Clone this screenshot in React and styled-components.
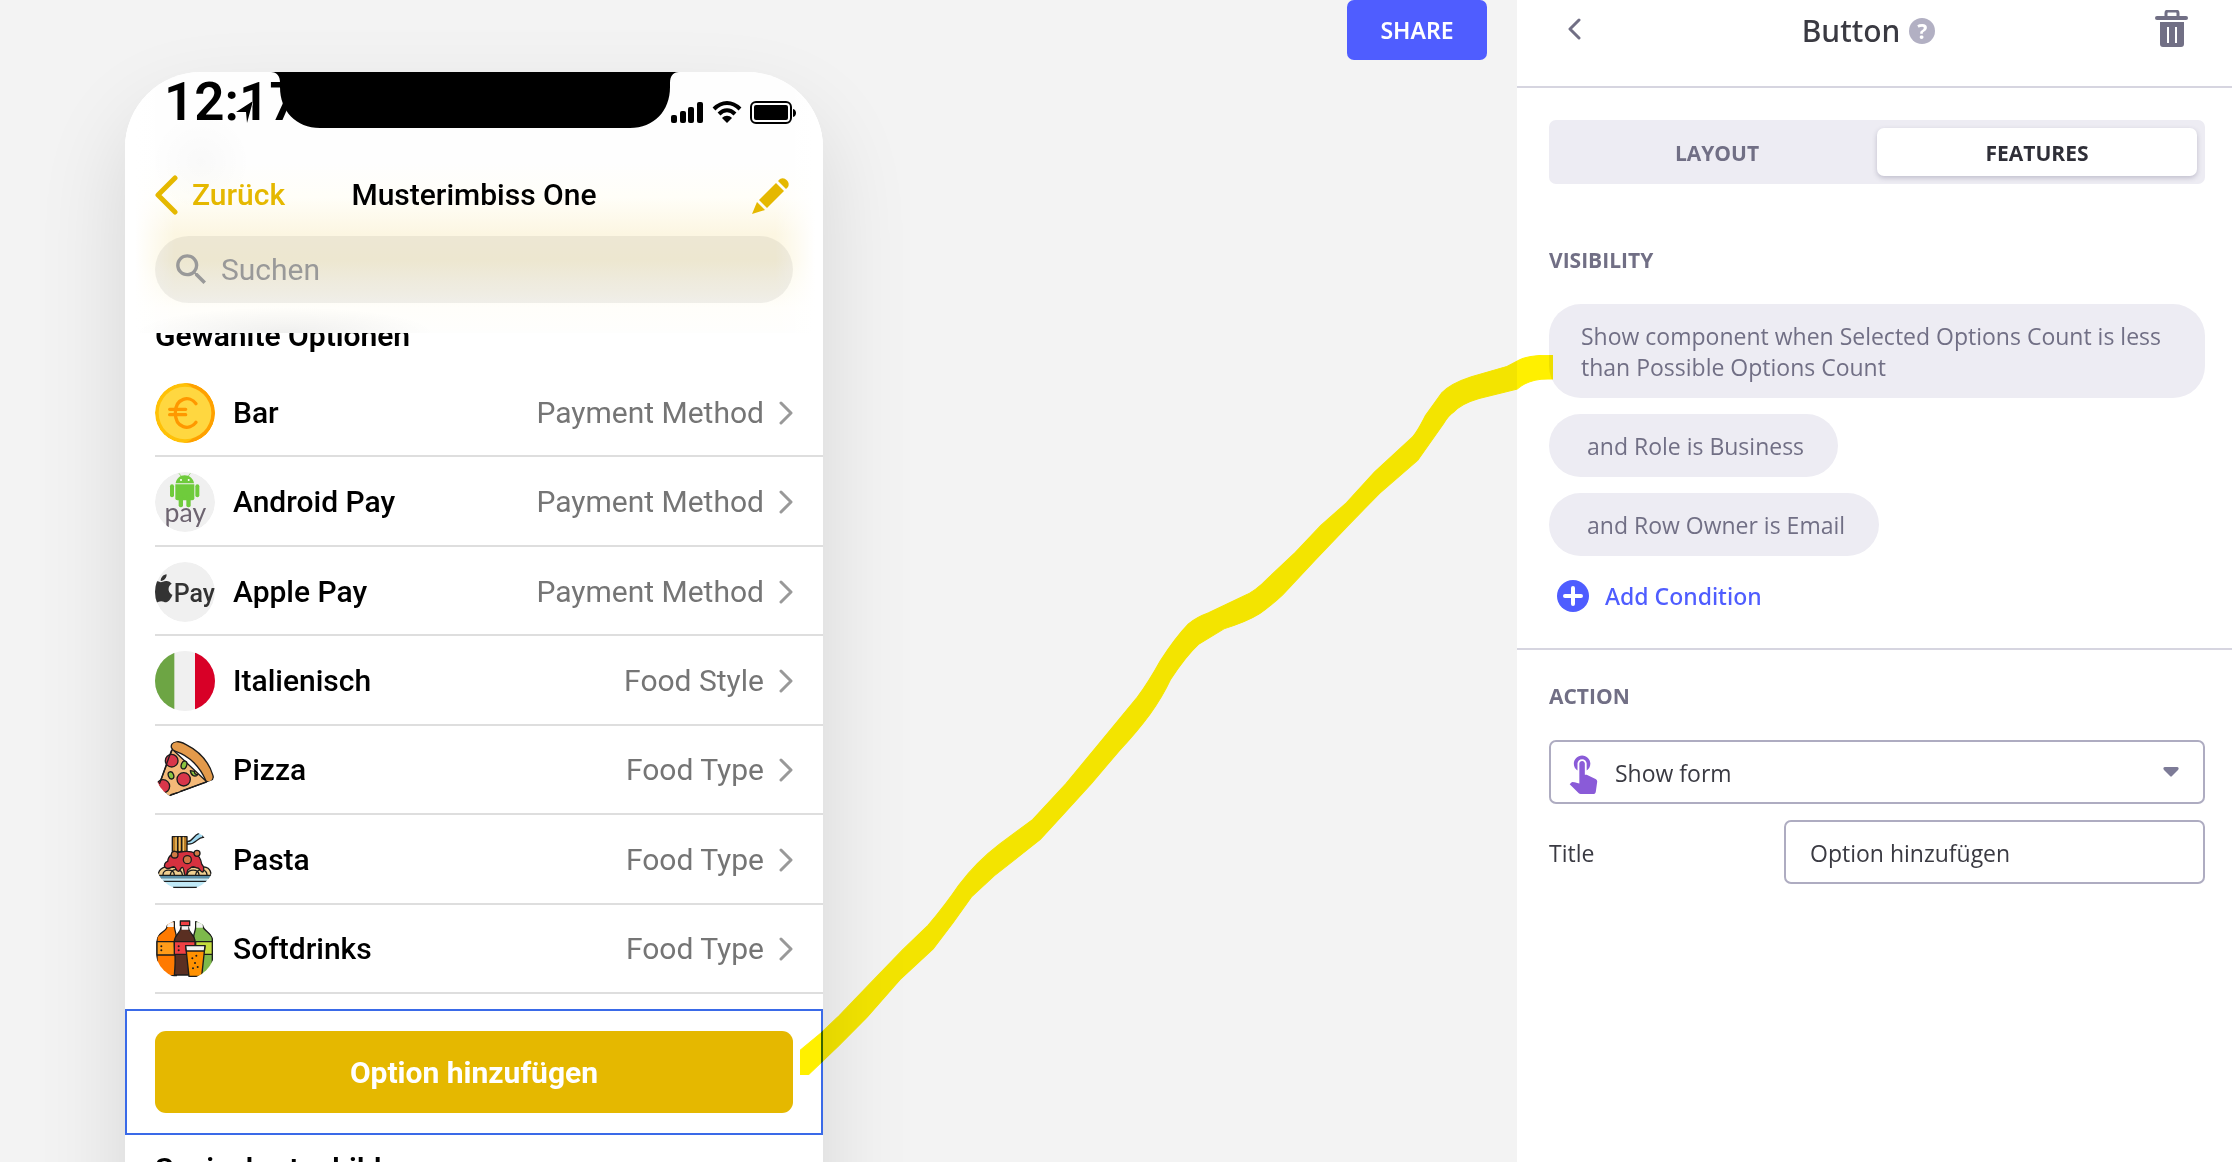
import styled, { createGlobalStyle } from "styled-components";
import { FaApple } from "react-icons/fa";
import { MdSearch, MdTouchApp } from "react-icons/md";

const INK = "#1c1c1c";

const Coin = () => (
  <svg viewBox="0 0 180 180">
    <circle cx="90" cy="90" r="90" fill="#ffc107" />
    <path d="M90 0a90 90 0 0 1 0 180a100 100 0 0 0 60-90a100 100 0 0 0-60-90z" fill="#ffa000" />
    <circle cx="90" cy="90" r="79" fill="#ffd740" />
    <g fill="none" stroke="#ff9800" strokeWidth="10" strokeLinecap="round">
      <path d="M123 62c-19-26-62-18-62 28s43 54 62 28" />
      <path d="M44 79h48M44 95h48" />
    </g>
  </svg>
);

const AndroidPay = () => (
  <svg viewBox="0 0 180 180">
    <circle cx="90" cy="90" r="90" fill="#f0f0f0" />
    <g fill="#6fcb3c">
      <path d="M62 34c2-14 13-24 27-24s26 10 28 24z" />
      <path d="M78 12l-6-8M100 12l6-8" stroke="#6fcb3c" strokeWidth="2" />
      <path d="M61 37h57v42a6 6 0 0 1-6 6H67a6 6 0 0 1-6-6z" />
      <rect x="45" y="37" width="12" height="39" rx="6" />
      <rect x="121" y="37" width="12" height="39" rx="6" />
      <rect x="71" y="70" width="13" height="36" rx="6" />
      <rect x="94" y="70" width="13" height="36" rx="6" />
    </g>
    <circle cx="78" cy="24" r="3" fill="#fff" />
    <circle cx="101" cy="24" r="3" fill="#fff" />
    <text x="91" y="151" textAnchor="middle" fontFamily="Lato, sans-serif" fontSize="80" fill="#6d6470">
      pay
    </text>
  </svg>
);

const ApplePay = () => (
  <svg viewBox="0 0 180 180">
    <circle cx="90" cy="90" r="90" fill="#f0f0f0" />
    <FaApple x="-31" y="31" size={96} color="#333" />
    <text x="56" y="121" fontFamily="Roboto, sans-serif" fontWeight="500" fontSize="75" fill="#333">
      Pay
    </text>
  </svg>
);

const Flag = () => (
  <svg viewBox="0 0 180 180">
    <rect width="180" height="180" fill="#f0f0f0" />
    <rect width="58" height="180" fill="#6da544" />
    <rect x="120" width="60" height="180" fill="#d80027" />
  </svg>
);

const Pizza = () => (
  <svg viewBox="0 0 180 180">
    <g stroke={INK} strokeWidth="4" strokeLinejoin="round" strokeLinecap="round">
      <path d="M52 28L8 146L42 168L156 126z" fill="#f4b978" />
      <circle cx="50" cy="62" r="19" fill="#d9364a" />
      <circle cx="86" cy="118" r="20" fill="#d9364a" />
      <circle cx="24" cy="139" r="20" fill="#d9364a" />
      <ellipse cx="87" cy="75" rx="8" ry="12" fill="#8bc53f" transform="rotate(20 87 75)" />
      <ellipse cx="48" cy="106" rx="8" ry="11" fill="#8bc53f" transform="rotate(-20 48 106)" />
      <path d="M106 92c2 16 14 20 22 12c-8 0-10-6-10-10z" fill="#8bc53f" />
      <path
        d="M52 10c8-10 22-6 40 3c44 22 70 52 82 94c4 16-14 24-22 14C136 82 104 48 62 34c-14-4-16-16-10-24z"
        fill="#e39a4b"
      />
    </g>
    <path d="M0 118L42 0H0zM0 140L38 172L180 118V180H0z" fill="#fff" />
    <path d="M48 164l20-6M76 154l78-28M49 32L14 130" stroke={INK} strokeWidth="4" strokeLinecap="round" />
  </svg>
);

const Pasta = () => (
  <svg viewBox="0 0 180 180">
    <g stroke={INK} strokeWidth="4" strokeLinejoin="round" strokeLinecap="round">
      <path d="M96 34c16 4 18-18 36-24c6-2 12-2 18 0c-8 2-8 10-4 12c-20-2-22 24-50 20z" fill="#9fd8ef" />
      <rect x="52" y="20" width="44" height="44" fill="#b87a23" />
      <path d="M63 22v40M74 22v40M85 22v40" stroke="#f0c46a" />
      <path d="M68 22v40M80 22v40" />
      <path d="M10 136c0-24 24-28 34-24h96c14-4 28 4 28 24z" fill="#f0cf90" />
      <path d="M24 134c0-18 32-18 34 0M46 134c4-22 34-18 36 0M96 134c4-18 34-18 36 0M122 134c4-20 32-18 34 0" fill="none" />
      <path
        d="M30 112c-4-6 0-16 8-18c2-20 18-24 38-28c40-8 60 8 64 36c8 8 8 24 2 24s-8-12-14-12s-8-4-14-4c-8 0-8 8-14 8c-6 4-2 18-8 18s-4-24-10-24s-6 12-12 12c-8 0-6-14-14-14s-16 12-26 2z"
        fill="#d6313f"
      />
      <circle cx="59" cy="74" r="10" fill="#cf7a45" />
      <circle cx="126" cy="70" r="9" fill="#cf7a45" />
      <circle cx="97" cy="89" r="12" fill="#cf7a45" />
      <path d="M10 137h160l-6 8H16z" fill="#6fb7d8" />
      <path d="M16 145h148c-12 16-22 26-34 30H50c-12-4-22-14-34-30z" fill="#bfe9f7" stroke="none" />
    </g>
    <path d="M22 154h136" stroke={INK} strokeWidth="4" />
    <path d="M54 172h72" stroke={INK} strokeWidth="4" />
  </svg>
);

const Drinks = () => (
  <svg viewBox="0 0 180 180">
    <g stroke={INK} strokeWidth="4" strokeLinejoin="round">
      <path d="M36 8h22v16c2 14 6 18 6 32v114H6V56c4-12 28-20 30-32z" fill="#ff7a00" />
      <path d="M6 68h56v40H6z" fill="#ff9c1a" />
      <path d="M122 8h22v16c4 12 28 20 28 36v112h-56V54c0-12 6-18 6-30z" fill="#7db94b" />
      <path d="M122 68h50v38h-50z" fill="#c5dd3d" />
      <path d="M78 24h22c0 20 20 20 20 44c0 36-6 40 0 100H58c6-60 0-64 0-100c0-24 20-24 20-44z" fill="#5a2f22" />
      <path d="M58 68h62v38H58z" fill="#ef4044" />
      <path d="M76 6h28v14H76z" fill="#ef4044" />
      <path d="M92 80h58l-10 92h-38z" fill="#ff9100" />
      <path d="M92 80h58l-2 16H94z" fill="#f3f3f3" />
    </g>
    <path d="M38 10h18v14H36zM124 10h18l2 16h-20zM80 22h20v10H80z" fill="#f3f3f3" />
    <g fill={INK}>
      <circle cx="19" cy="82" r="3" />
      <circle cx="19" cy="94" r="3" />
      <circle cx="71" cy="82" r="3" />
      <circle cx="71" cy="94" r="3" />
      <circle cx="112" cy="118" r="3" />
      <circle cx="124" cy="110" r="3" />
      <circle cx="120" cy="132" r="3" />
      <circle cx="114" cy="148" r="3" />
      <circle cx="128" cy="144" r="3" />
    </g>
  </svg>
);

const options = [
  { name: "Bar", type: "Payment Method", Icon: Coin },
  { name: "Android Pay", type: "Payment Method", Icon: AndroidPay },
  { name: "Apple Pay", type: "Payment Method", Icon: ApplePay },
  { name: "Italienisch", type: "Food Style", Icon: Flag },
  { name: "Pizza", type: "Food Type", Icon: Pizza },
  { name: "Pasta", type: "Food Type", Icon: Pasta },
  { name: "Softdrinks", type: "Food Type", Icon: Drinks },
];

const StatusIcons = () => (
  <svg width="126" height="24" viewBox="0 0 126 24">
    <rect x="0" y="14" width="6" height="8" rx="2" />
    <rect x="9" y="10" width="6" height="12" rx="2" />
    <rect x="17" y="6" width="6" height="16" rx="2" />
    <rect x="26" y="1" width="6" height="21" rx="2" />
    <g fill="none" stroke="#000" strokeWidth="4">
      <path d="M43 8c8-8 18-8 26 0" />
      <path d="M48 13c5-5 11-5 16 0" />
    </g>
    <path d="M51 17c3-3 7-3 10 0l-5 5z" />
    <rect x="80" y="1" width="40" height="21" rx="5" fill="none" stroke="#000" strokeWidth="2" />
    <rect x="83" y="4" width="34" height="15" rx="2" />
    <path d="M122 8c4 1 4 7 0 8z" />
  </svg>
);

const PhonePreview = () => (
  <Phone>
    <AppHeader>
      <StatusBar>
        <Time>12:17</Time>
        <LocationArrow width="17" height="22" viewBox="0 0 17 22">
          <path d="M0 11L17 0L11 22L10 11z" />
        </LocationArrow>
        <Notch width="408" height="56" viewBox="0 0 408 56">
          <path d="M0 0h408c-6 0-9 4-9 11v4c0 24-16 41-40 41H49C25 56 9 39 9 15v-4C9 4 6 0 0 0z" />
        </Notch>
        <StatusIcons />
      </StatusBar>
      <NavBar>
        <BackLink href="#back">
          <svg width="23" height="40" viewBox="0 0 23 40">
            <path d="M20 3L3 20l17 17" fill="none" stroke="#e5b800" strokeWidth="5" strokeLinecap="round" strokeLinejoin="round" />
          </svg>
          Zurück
        </BackLink>
        <NavTitle>Musterimbiss One</NavTitle>
        <EditButton aria-label="Bearbeiten">
          <svg width="38" height="38" viewBox="0 0 38 38" fill="#e5b800">
            <path d="M28 3a6 6 0 0 1 8 8l-2 2l-8-8z" />
            <path d="M24 7l8 8L15 32l-8-8z" />
            <path d="M5 26l8 8l-13 4z" />
          </svg>
        </EditButton>
      </NavBar>
      <SearchBox>
        <MdSearch size={41} />
        <input type="search" placeholder="Suchen" aria-label="Suchen" />
      </SearchBox>
    </AppHeader>
    <SectionHeading>Gewählte Optionen</SectionHeading>
    <OptionList>
      {options.map(({ name, type, Icon }) => (
        <Option key={name}>
          <Thumb>
            <Icon />
          </Thumb>
          <OptionName>{name}</OptionName>
          <OptionType>{type}</OptionType>
          <svg width="16" height="24" viewBox="0 0 16 24">
            <path d="M3 2l10 10L3 22" fill="none" stroke="#999" strokeWidth="3" strokeLinecap="round" strokeLinejoin="round" />
          </svg>
        </Option>
      ))}
    </OptionList>
    <Selection>
      <PrimaryButton>Option hinzufügen</PrimaryButton>
    </Selection>
    <SectionHeading $next>Speisekartenbild</SectionHeading>
  </Phone>
);

const Inspector = () => (
  <Panel>
    <PanelHeader>
      <IconButton aria-label="Back">
        <svg width="21" height="22" viewBox="0 0 21 22">
          <path d="M18 2L9 11l9 9" fill="none" stroke="#716f85" strokeWidth="3" strokeLinecap="round" strokeLinejoin="round" />
        </svg>
      </IconButton>
      <PanelTitle>
        Button <Help>?</Help>
      </PanelTitle>
      <IconButton aria-label="Delete">
        <svg width="34" height="38" viewBox="0 0 34 38" fill="#716f85">
          <path d="M11 7V3a2 2 0 0 1 2-2h8a2 2 0 0 1 2 2v4" fill="none" stroke="#716f85" strokeWidth="3" />
          <rect x="0" y="6" width="33" height="4" rx="2" />
          <path
            fillRule="evenodd"
            d="M5 12h24v22a3 3 0 0 1-3 3H8a3 3 0 0 1-3-3zM12 17v16h2V17zM20 17v16h2V17z"
          />
        </svg>
      </IconButton>
    </PanelHeader>
    <Section>
      <Tabs role="tablist">
        <Tab role="tab" aria-selected="false">LAYOUT</Tab>
        <Tab role="tab" aria-selected="true" $active>FEATURES</Tab>
      </Tabs>
      <Label>VISIBILITY</Label>
      <Conditions>
        <Chip>Show component when Selected Options Count is less than Possible Options Count</Chip>
        <Chip $nested>and Role is Business</Chip>
        <Chip $nested>and Row Owner is Email</Chip>
      </Conditions>
      <AddButton>
        <svg width="32" height="32" viewBox="0 0 32 32">
          <circle cx="16" cy="16" r="16" fill="#4f5dff" />
          <path d="M16 8v16M8 16h16" stroke="#fff" strokeWidth="4" strokeLinecap="round" />
        </svg>
        Add Condition
      </AddButton>
    </Section>
    <Section>
      <Label>ACTION</Label>
      <SelectBox>
        <MdTouchApp size={44} color="#8a5bd8" />
        <select aria-label="Action" defaultValue="form">
          <option value="form">Show form</option>
        </select>
        <svg width="16" height="10" viewBox="0 0 16 10">
          <path d="M2 0h12c2 0 2 2 1 3L9 9c-1 1-1 1-2 0L1 3C0 2 0 0 2 0z" fill="#7d7b97" />
        </svg>
      </SelectBox>
      <Field>
        <label htmlFor="title">Title</label>
        <TextInput id="title" type="text" defaultValue="Option hinzufügen" />
      </Field>
    </Section>
  </Panel>
);

const App = () => {
  return (
    <Page>
      <GlobalStyle />
      <Canvas>
        <PhonePreview />
        <ShareButton>SHARE</ShareButton>
      </Canvas>
      <Inspector />
      <Marker viewBox="39 32 1476 1525" preserveAspectRatio="none">
        <path
          d="M39 1505L80 1468L115 1432L170 1370L240 1292L290 1240Q325 1195 350 1155Q385 1105 430 1068L495 1016L560 940L620 862L700 757
          Q722 725 745 680Q775 630 800 602Q815 588 840 578L910 542Q932 532 955 506L1010 450L1060 393L1110 345L1165 280L1235 210
          Q1245 203 1265 160L1297 112Q1315 92 1355 78L1425 56L1450 42Q1468 32 1515 32V83Q1470 80 1445 104L1370 124
          Q1335 135 1320 153Q1310 160 1300 178L1250 255L1175 325L1110 397L1050 465L985 540Q960 565 940 580Q915 597 870 612
          L820 645Q795 670 765 720Q750 755 725 793Q700 830 665 870L610 940L555 1005L510 1058L420 1135L375 1180Q340 1235 300 1290
          L235 1355L170 1435L115 1495L55 1557H39z"
          fill="#fff000"
          stroke="#fff000"
          strokeWidth="2"
        />
      </Marker>
    </Page>
  );
};

const GlobalStyle = createGlobalStyle`
  * {
    box-sizing: border-box;
  }
  body {
    margin: 0;
    background-color: #f3f3f3;
    overflow: hidden;
  }
  button, input, select {
    font: inherit;
    color: inherit;
  }
  button {
    border: none;
    background: none;
    padding: 0;
    cursor: pointer;
  }
  svg {
    display: block;
    flex: none;
  }
`;

const Page = styled.div`
  position: relative;
  display: flex;
  height: 100vh;
  overflow: hidden;
  font-family: "Open Sans", "Noto Sans", sans-serif;
  font-size: 23px;
  line-height: 31px;
  color: #3a3a42;
`;

const Canvas = styled.main`
  flex: 1;
  display: flex;
  align-items: flex-start;
  justify-content: space-between;
  padding: 0 30px 0 125px;
`;

const ShareButton = styled.button`
  width: 140px;
  height: 60px;
  border-radius: 7px;
  background-color: #4f5dff;
  color: white;
  font-family: "Noto Sans", sans-serif;
  font-weight: 600;
`;

const Marker = styled.svg`
  position: absolute;
  left: 800px;
  top: 355px;
  width: 753px;
  height: 720px;
  mix-blend-mode: multiply;
  pointer-events: none;
`;

const Phone = styled.div`
  width: 698px;
  flex: none;
  margin-top: 72px;
  padding-bottom: 300px;
  border-radius: 76px;
  overflow: hidden;
  background-color: white;
  box-shadow: 0 40px 90px rgba(0, 0, 0, 0.12);
  font-family: Roboto, sans-serif;
  font-size: 30px;
  line-height: 36px;
  color: black;
`;

const AppHeader = styled.header`
  position: relative;
  z-index: 1;
  height: 261px;
  background:
    radial-gradient(ellipse 150px 26px at 160px 100%, rgba(0, 0, 0, 0.06), transparent),
    radial-gradient(circle 50px at 76px 90px, rgba(0, 0, 0, 0.02), transparent),
    linear-gradient(90deg, white 10px, transparent 50px, transparent 650px, white 690px),
    linear-gradient(#fefefe 35%, #fffef8 48%, #fcf6e2 62%, #fcf6de 72%, #fffefa 90%, #fefefd);
`;

const StatusBar = styled.div`
  position: relative;
  display: flex;
  align-items: flex-start;
  justify-content: space-between;
  height: 84px;
  padding: 0 26px 0 39px;
  > svg:last-child {
    margin-top: 29px;
  }
`;

const Time = styled.span`
  font-size: 53px;
  font-weight: 600;
  line-height: 60px;
`;

const LocationArrow = styled.svg`
  position: absolute;
  left: 111px;
  top: 29px;
  stroke: white;
  stroke-width: 1px;
  paint-order: stroke;
`;

const Notch = styled.svg`
  position: absolute;
  left: 146px;
  top: 0;
`;

const NavBar = styled.nav`
  display: grid;
  grid-template-columns: 1fr auto 1fr;
  align-items: center;
  height: 78px;
  margin-bottom: 2px;
  padding: 0 30px;
  font-weight: 500;
`;

const BackLink = styled.a`
  display: flex;
  align-items: center;
  gap: 14px;
  color: #e5b800;
  text-decoration: none;
`;

const NavTitle = styled.span`
  font-weight: 500;
`;

const EditButton = styled.button`
  justify-self: end;
  padding-right: 3px;
`;

const SearchBox = styled.div`
  display: flex;
  align-items: center;
  gap: 9px;
  height: 67px;
  margin: 0 30px;
  padding: 0 16px;
  border-radius: 34px;
  background-color: rgba(0, 0, 0, 0.06);
  color: #999;
  input {
    flex: 1;
    border: none;
    padding: 0;
    background: none;
    outline: none;
  }
  input::placeholder {
    color: #999;
  }
`;

const SectionHeading = styled.h2`
  margin: ${(p) => (p.$next ? "16px 30px 0" : "-15px 30px 14px")};
  font-size: 30px;
  font-weight: 600;
`;

const OptionList = styled.ul`
  display: grid;
  grid-auto-rows: 1fr;
  height: 626px;
  margin: 0 0 15px 30px;
  padding: 0;
  list-style: none;
`;

const Option = styled.li`
  display: flex;
  align-items: center;
  padding: 2px 29px 0 0;
  border-bottom: 2px solid #dedede;
`;

const Thumb = styled.div`
  width: 60px;
  height: 60px;
  margin-right: 18px;
  border-radius: 50%;
  overflow: hidden;
`;

const OptionName = styled.span`
  flex: 1;
  font-weight: 500;
`;

const OptionType = styled.span`
  margin-right: 14px;
  color: #757575;
`;

const Selection = styled.div`
  padding: 20px 28px;
  border: 2px solid #3a6ae8;
`;

const PrimaryButton = styled.button`
  display: block;
  width: 100%;
  height: 82px;
  padding-top: 2px;
  border-radius: 11px;
  background-color: #e5b800;
  color: white;
  font-weight: 700;
`;

const Panel = styled.aside`
  flex: 0 0 715px;
  background-color: white;
`;

const PanelHeader = styled.div`
  display: flex;
  align-items: flex-start;
  justify-content: space-between;
  height: 88px;
  padding: 10px 43px 0 44px;
  border-bottom: 2px solid #d6d5e0;
`;

const IconButton = styled.button`
  display: flex;
  align-items: center;
  height: 37px;
`;

const PanelTitle = styled.h1`
  display: flex;
  align-items: center;
  gap: 9px;
  margin: 0;
  font-family: "Noto Sans", sans-serif;
  font-size: 30px;
  font-weight: 500;
  line-height: 42px;
`;

const Help = styled.span`
  width: 26px;
  height: 26px;
  border-radius: 50%;
  background-color: #b2b0c3;
  color: white;
  font-size: 21px;
  font-weight: 700;
  line-height: 26px;
  text-align: center;
`;

const Section = styled.section`
  padding: 32px 27px 36px 32px;
  & + & {
    border-top: 2px solid #d6d5e0;
  }
`;

const Tabs = styled.div`
  display: grid;
  grid-template-columns: 1fr 1fr;
  height: 64px;
  margin-bottom: 62px;
  padding: 8px;
  border-radius: 7px;
  background-color: #edecf3;
`;

const Tab = styled.button`
  padding-top: 2px;
  border-radius: 7px;
  font-size: 21px;
  font-weight: 700;
  color: ${(p) => (p.$active ? "#2f2f38" : "#716f85")};
  background-color: ${(p) => (p.$active ? "white" : "transparent")};
  box-shadow: ${(p) => (p.$active ? "0 2px 5px rgba(60, 55, 90, 0.25)" : "none")};
`;

const Label = styled.h2`
  margin: 0 0 30px;
  font-size: 21px;
  font-weight: 700;
  line-height: 28px;
  color: #716f85;
`;

const Conditions = styled.div`
  display: flex;
  flex-direction: column;
  align-items: flex-start;
  gap: 16px;
`;

const Chip = styled.div`
  padding: ${(p) => (p.$nested ? "17px 34px 15px 38px" : "17px 32px 15px")};
  border-radius: 32px;
  background-color: #edecf3;
  color: #716f85;
`;

const AddButton = styled.button`
  display: flex;
  align-items: center;
  gap: 16px;
  height: 32px;
  margin: 24px 0 0 8px;
  color: #4f5dff;
  font-family: "Noto Sans", sans-serif;
  font-weight: 500;
`;

const SelectBox = styled.div`
  display: flex;
  align-items: center;
  height: 64px;
  margin-bottom: 16px;
  padding: 0 24px 0 10px;
  border: 2px solid #aeacc1;
  border-radius: 7px;
  select {
    flex: 1;
    height: 60px;
    padding: 2px 0 0 10px;
    border: none;
    background: none;
    appearance: none;
    outline: none;
  }
`;

const Field = styled.div`
  display: grid;
  grid-template-columns: 235px 1fr;
  align-items: center;
  label {
    padding-top: 2px;
  }
`;

const TextInput = styled.input`
  width: 100%;
  height: 64px;
  padding: 2px 24px 0;
  border: 2px solid #aeacc1;
  border-radius: 7px;
  background: white;
  outline: none;
`;

export default App;
